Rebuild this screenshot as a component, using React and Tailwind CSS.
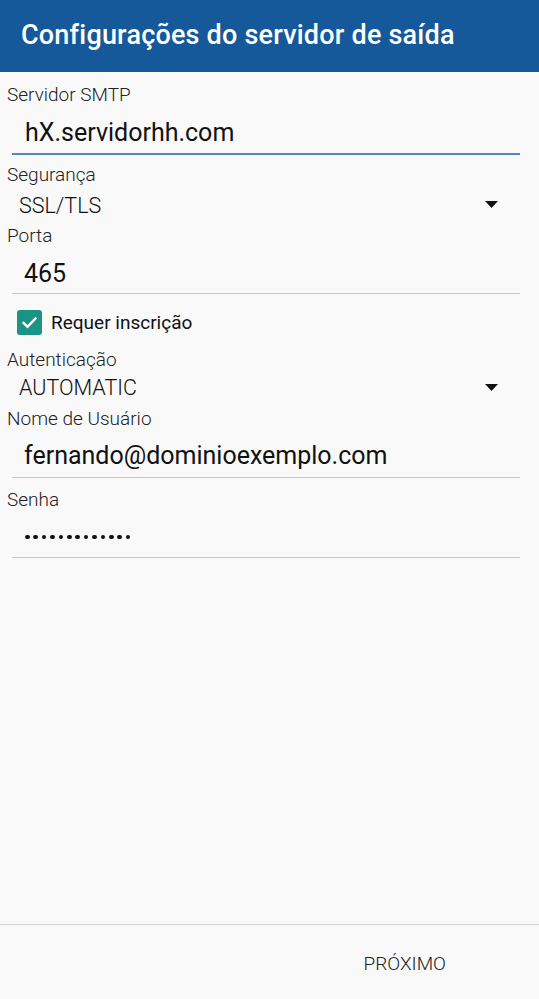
import React from 'react';

const font = { fontFamily: 'Roboto, "Liberation Sans", sans-serif' };

const Dropdown = () => (
  <svg width="13" height="7" viewBox="0 0 13 7" className="mr-[41px] mt-[-2px]">
    <path d="M0 0 L13 0 L6.5 7 Z" fill="#111" />
  </svg>
);

const App = () => {
  return (
    <div className="w-[539px] h-[999px] bg-[#f9f9f9] flex flex-col" style={font}>
      {/* Toolbar */}
      <div className="h-[72px] bg-[#15599b] flex items-center pl-[21px] pb-[2px]">
        <h1 className="text-white text-[27px] font-medium tracking-[0.2px]">
          Configurações do servidor de saída
        </h1>
      </div>

      {/* Servidor SMTP */}
      <div className="pt-[13px] pl-[7px] leading-[20px] text-[19px] font-light text-[#222]">Servidor SMTP</div>
      <div className="ml-[12px] mr-[19px] h-[50px] pt-[8px] border-b-2 border-[#5a83c2]">
        <div className="pl-[13px] leading-[39px] text-[25px] text-[#111]">hX.servidorhh.com</div>
      </div>

      {/* Segurança */}
      <div className="pt-[10px] pl-[7px] leading-[20px] text-[19px] font-light text-[#222]">Segurança</div>
      <div className="h-[41px] flex items-center justify-between pl-[19px]">
        <span className="text-[21.5px] font-light text-[#111] leading-[41px]">SSL/TLS</span>
        <Dropdown />
      </div>

      {/* Porta */}
      <div className="pl-[7px] leading-[19px] text-[19px] font-light text-[#222]">Porta</div>
      <div className="ml-[12px] mr-[19px] h-[49px] pt-[10px] border-b border-[#c9c9c9]">
        <div className="pl-[12px] leading-[38px] text-[25px] text-[#111]">465</div>
      </div>

      {/* Requer inscrição */}
      <div className="pt-[16px] pl-[17px] flex items-center gap-[9px] h-[41px]">
        <div className="w-[25px] h-[25px] rounded-[3px] bg-[#1b9486] flex items-center justify-center">
          <svg width="19" height="19" viewBox="0 0 24 24" fill="none">
            <path d="M4.5 12.5 L9.5 17.5 L19.5 7" stroke="#fff" strokeWidth="3" strokeLinecap="square" />
          </svg>
        </div>
        <span className="text-[19px] text-[#111] leading-[25px]">Requer inscrição</span>
      </div>

      {/* Autenticação */}
      <div className="pt-[14px] pl-[7px] leading-[21px] text-[19px] font-light text-[#222]">Autenticação</div>
      <div className="h-[36px] flex items-center justify-between pl-[19px]">
        <span className="text-[21.5px] font-light text-[#111] leading-[36px]">AUTOMATIC</span>
        <Dropdown />
      </div>

      {/* Nome de Usuário */}
      <div className="pl-[7px] leading-[26px] text-[19px] font-light text-[#222]">Nome de Usuário</div>
      <div className="ml-[12px] mr-[19px] h-[46px] pt-[4px] border-b border-[#c9c9c9]">
        <div className="pl-[12px] leading-[39px] text-[25px] text-[#111]">fernando@dominioexemplo.com</div>
      </div>

      {/* Senha */}
      <div className="pt-[11px] pl-[7px] leading-[21px] text-[19px] font-light text-[#222]">Senha</div>
      <div className="ml-[12px] mr-[19px] h-[48px] pt-[7px] border-b border-[#c9c9c9]">
        <div className="pl-[13px] h-[40px] flex items-center gap-[3.8px]">
          {Array.from({ length: 13 }).map((_, i) => (
            <span key={i} className="w-[4.6px] h-[4.6px] rounded-full bg-[#111]" />
          ))}
        </div>
      </div>

      <div className="flex-1" />

      {/* Footer */}
      <div className="h-[75px] border-t border-[#d6d6d6] flex justify-end pt-[19px] pr-[93px]">
        <button className="text-[19px] font-light text-[#222] leading-[40px] h-[40px]">PRÓXIMO</button>
      </div>
    </div>
  );
};

export default App;
